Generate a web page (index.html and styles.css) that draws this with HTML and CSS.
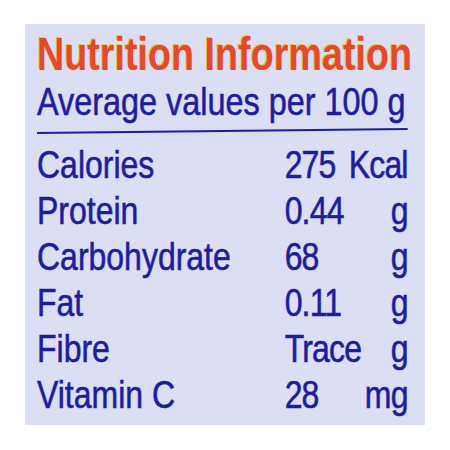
FILE: index.html
```html
<!DOCTYPE html>
<html lang="en">
<head>
    <meta charset="UTF-8">
    <title>Nutrition Information</title>
    <link rel="stylesheet" href="styles.css">
</head>
<body>
    <div class="label-panel">
        <div class="narrow">
            <h1 class="title">Nutrition Information</h1>
            <p class="subtitle">Average values per 100 g</p>
            <div class="rule"></div>

            <div class="facts">
                <div class="row"><span class="name">Calories</span><span class="amount">275</span><span class="unit">Kcal</span></div>
                <div class="row"><span class="name">Protein</span><span class="amount">0.44</span><span class="unit">g</span></div>
                <div class="row"><span class="name">Carbohydrate</span><span class="amount">68</span><span class="unit">g</span></div>
                <div class="row"><span class="name">Fat</span><span class="amount">0.11</span><span class="unit">g</span></div>
                <div class="row"><span class="name">Fibre</span><span class="amount">Trace</span><span class="unit">g</span></div>
                <div class="row"><span class="name">Vitamin C</span><span class="amount">28</span><span class="unit">mg</span></div>
            </div>
        </div>
    </div>
</body>
</html>
```

FILE: styles.css
```css
* {
    margin: 0;
    padding: 0;
    box-sizing: border-box;
}

html, body {
    overflow: hidden;
}

body {
    background: #ffffff;
    font-family: 'Liberation Sans', Arial, sans-serif;
    color: #1e1e9c;
    padding: 24px 25px;
}

.label-panel {
    width: 400px;
    height: 401px;
    background: #dcdff4;
    padding: 6px 0 0 12px;
    overflow: hidden;
}

/* the print face is a condensed grotesque, so squeeze Arial metrics */
.narrow {
    width: 452px;
    transform: scaleX(0.82);
    transform-origin: left top;
}

.title {
    font-size: 46px;
    line-height: 49px;
    font-weight: bold;
    color: #e4492c;
    text-shadow: -1px -1px 0 #e8c23c;
    white-space: nowrap;
}

.subtitle {
    font-size: 39.5px;
    line-height: 44px;
    white-space: nowrap;
    -webkit-text-stroke: 0.6px #1e1e9c;
}

.rule {
    height: 2px;
    background: #1e1e9c;
    margin: 7px 0 10px 0;
    transform: rotate(-0.5deg);
}

.facts {
    font-size: 39px;
    line-height: 46px;
    white-space: nowrap;
    -webkit-text-stroke: 0.6px #1e1e9c;
}

.row {
    display: flex;
}

.name {
    width: 302px;
    flex-shrink: 0;
}

.amount,
.unit {
    letter-spacing: -1px;
}

.unit {
    margin-left: auto;
}
```
